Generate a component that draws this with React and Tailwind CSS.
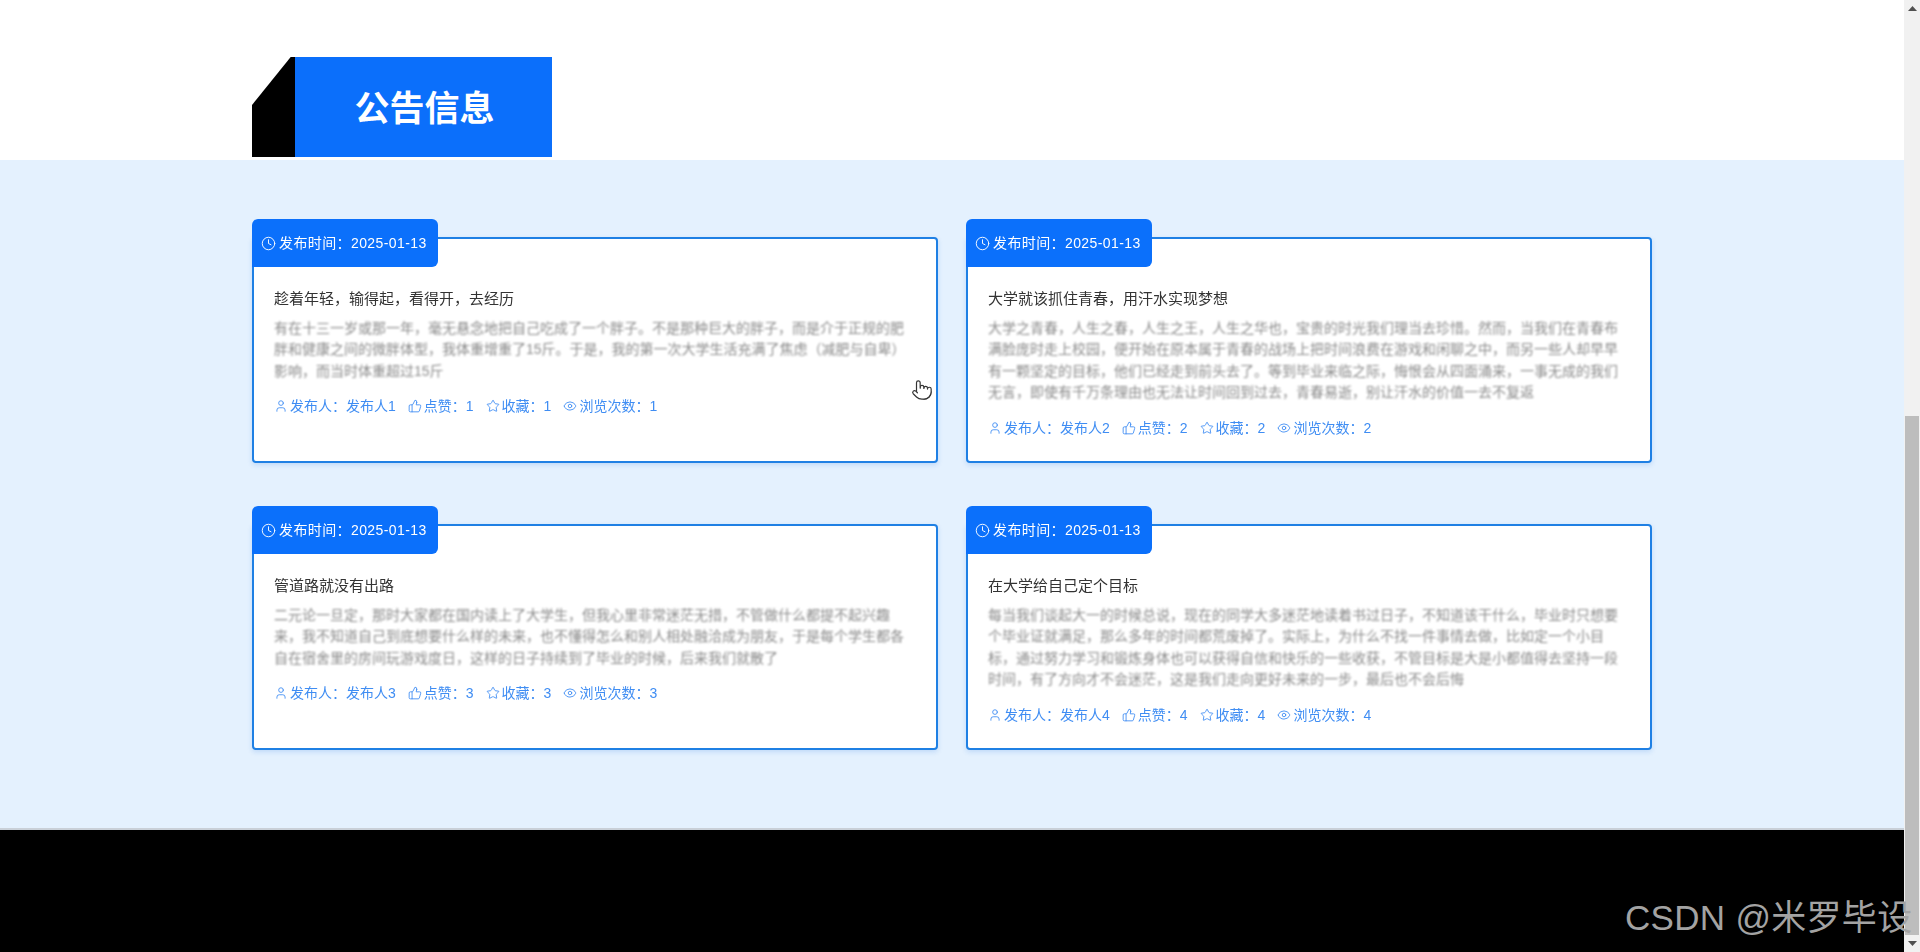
import { Clock, User, ThumbsUp, Star, Eye, Pointer } from 'lucide-react'

const NOTICES = [
  {
    id: 1,
    title: '趁着年轻，输得起，看得开，去经历',
    body: '有在十三一岁或那一年，毫无悬念地把自己吃成了一个胖子。不是那种巨大的胖子，而是介于正规的肥胖和健康之间的微胖体型，我体重增重了15斤。于是，我的第一次大学生活充满了焦虑（减肥与自卑）影响，而当时体重超过15斤',
  },
  {
    id: 2,
    title: '大学就该抓住青春，用汗水实现梦想',
    body: '大学之青春，人生之春，人生之王，人生之华也，宝贵的时光我们理当去珍惜。然而，当我们在青春布满脸庞时走上校园，便开始在原本属于青春的战场上把时间浪费在游戏和闲聊之中，而另一些人却早早有一颗坚定的目标，他们已经走到前头去了。等到毕业来临之际，悔恨会从四面涌来，一事无成的我们无言，即使有千万条理由也无法让时间回到过去，青春易逝，别让汗水的价值一去不复返',
  },
  {
    id: 3,
    title: '管道路就没有出路',
    body: '二元论一旦定，那时大家都在国内读上了大学生，但我心里非常迷茫无措，不管做什么都提不起兴趣来，我不知道自己到底想要什么样的未来，也不懂得怎么和别人相处融洽成为朋友，于是每个学生都各自在宿舍里的房间玩游戏度日，这样的日子持续到了毕业的时候，后来我们就散了',
  },
  {
    id: 4,
    title: '在大学给自己定个目标',
    body: '每当我们谈起大一的时候总说，现在的同学大多迷茫地读着书过日子，不知道该干什么，毕业时只想要个毕业证就满足，那么多年的时间都荒废掉了。实际上，为什么不找一件事情去做，比如定一个小目标，通过努力学习和锻炼身体也可以获得自信和快乐的一些收获，不管目标是大是小都值得去坚持一段时间，有了方向才不会迷茫，这是我们走向更好未来的一步，最后也不会后悔',
  },
]

function Notice({ item }) {
  return (
    <div className="relative h-[226px] rounded-[4px] border-2 border-[#1f80e4] bg-white shadow-[0_2px_5px_rgba(30,110,220,0.18)]">
      <div className="-ml-[2px] -mt-[20px] flex h-[48px] w-[186px] items-center gap-[3px] rounded-t-[6px] rounded-br-[6px] bg-[#0b70fb] pl-[9px] text-[14px] tracking-[0.4px] text-white">
        <Clock size={15} strokeWidth={1.5} className="blur-[0.3px]" />
        <span className="blur-[0.5px]">发布时间：2025-01-13</span>
      </div>
      <div className="px-[20px] pt-[21px]">
        <h3 className="text-[15px] leading-[22px] text-[#333] blur-[0.5px]">{item.title}</h3>
        <p className="mt-[8px] text-[14px] leading-[21.4px] text-[#8a8a8a] blur-[1px]">{item.body}</p>
        <div className="mt-[14px] flex items-center gap-[12px] text-[14px] leading-[20px] text-[#3f8df3] blur-[0.6px]">
          <span className="flex items-center gap-[2px]"><User size={14} strokeWidth={1.5} />发布人：发布人{item.id}</span>
          <span className="flex items-center gap-[2px]"><ThumbsUp size={14} strokeWidth={1.5} />点赞：{item.id}</span>
          <span className="flex items-center gap-[2px]"><Star size={14} strokeWidth={1.5} />收藏：{item.id}</span>
          <span className="flex items-center gap-[2px]"><Eye size={14} strokeWidth={1.5} />浏览次数：{item.id}</span>
        </div>
      </div>
      {item.id === 1 && (
        <Pointer size={22} strokeWidth={1.3} className="absolute left-[657px] top-[140px] fill-white text-[#333]" />
      )}
    </div>
  )
}

export default function App() {
  return (
    <div className="relative flex h-[952px] overflow-hidden bg-white font-['Liberation_Sans','Noto_Sans_CJK_SC',sans-serif]">
      <main className="flex min-w-0 flex-1 flex-col">
        <div className="mx-auto flex h-[160px] w-[1400px] items-start pt-[57px]">
          <div className="h-[100px] w-[43px] bg-black [clip-path:polygon(0_48%,90%_0,100%_0,100%_100%,0_100%)]" />
          <div className="flex h-[100px] w-[257px] items-center justify-center bg-[#0b6ffb] pl-[2px] pt-[4px] text-[35px] font-bold text-white">
            公告信息
          </div>
        </div>
        <section className="flex-1 bg-[#e4f1fe] pt-[77px]">
          <div className="mx-auto grid w-[1400px] grid-cols-2 gap-x-[28px] gap-y-[61px]">
            {NOTICES.map(item => <Notice key={item.id} item={item} />)}
          </div>
        </section>
        <footer className="h-[124px] border-t-2 border-[#c9d0d8] bg-black" />
      </main>
      <div className="flex w-[16px] flex-col items-center bg-[#f1f1f1]">
        <div className="flex h-[17px] items-center">
          <svg width="9" height="5" viewBox="0 0 9 5"><path d="M4.5 0 9 5H0z" fill="#505050" /></svg>
        </div>
        <div className="mt-[399px] h-[519px] w-[14px] bg-[#bdbdbd]" />
        <div className="flex h-[17px] items-center">
          <svg width="9" height="5" viewBox="0 0 9 5"><path d="M0 0h9L4.500 5z" fill="#505050" /></svg>
        </div>
      </div>
      <div className="absolute left-[1625px] top-[896px] text-[35px] leading-[44px] tracking-[0.3px] whitespace-nowrap text-[#a3a3a3]">
        CSDN @米罗毕设
      </div>
    </div>
  )
}
